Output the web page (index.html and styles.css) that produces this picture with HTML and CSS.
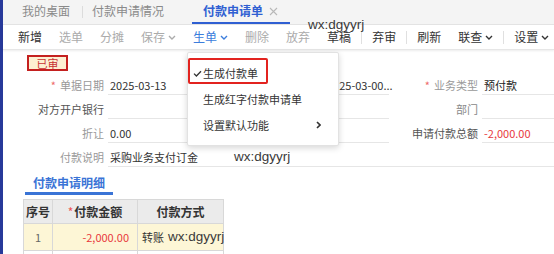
FILE: index.html
```html
<!DOCTYPE html>
<html lang="zh-CN">
<head>
<meta charset="utf-8">
<title>付款申请单</title>
<link rel="stylesheet" href="styles.css">
</head>
<body>
<div class="app">
  <div class="strip"></div>
  <div class="main">
    <div class="tabs">
      <div class="tab">我的桌面</div>
      <div class="tab tab-sep">付款申请情况</div>
      <div class="tab active">付款申请单<svg class="close" width="9" height="9" viewBox="0 0 9 9"><path d="M1 1l7 7M8 1L1 8" stroke="currentColor" stroke-width="1.1"/></svg></div>
    </div>
    <div class="toolbar">
      <span class="tb">新增</span>
      <span class="tb dis">选单</span>
      <span class="tb dis">分摊</span>
      <span class="tb dis">保存<svg class="chev" width="8" height="5" viewBox="0 0 8 5"><path d="M1 1l3 3 3-3" fill="none" stroke="currentColor" stroke-width="1.4"/></svg></span>
      <span class="tb blue">生单<svg class="chev" width="8" height="5" viewBox="0 0 8 5"><path d="M1 1l3 3 3-3" fill="none" stroke="currentColor" stroke-width="1.4"/></svg></span>
      <span class="tb dis">删除</span>
      <span class="tb dis">放弃</span>
      <span class="tb">草稿</span>
      <span class="sep"></span>
      <span class="tb">弃审</span>
      <span class="sep"></span>
      <span class="tb">刷新</span>
      <span class="tb">联查<svg class="chev" width="8" height="5" viewBox="0 0 8 5"><path d="M1 1l3 3 3-3" fill="none" stroke="currentColor" stroke-width="1.4"/></svg></span>
      <span class="sep"></span>
      <span class="tb">设置<svg class="chev" width="8" height="5" viewBox="0 0 8 5"><path d="M1 1l3 3 3-3" fill="none" stroke="currentColor" stroke-width="1.4"/></svg></span>
    </div>
    <div class="content">
      <div class="badge">已审</div>
      <div class="form">
        <div class="lbl light"><i>*</i>单据日期</div><div class="fld">2025-03-13</div>
        <div class="lbl"></div><div class="fld vis">2025-03-00...</div>
        <div class="lbl light"><i>*</i>业务类型</div><div class="fld strong">预付款</div>

        <div class="lbl">对方开户银行</div><div class="fld"></div>
        <div class="lbl"></div><div class="fld"></div>
        <div class="lbl mid">部门</div><div class="fld"></div>

        <div class="lbl light">折让</div><div class="fld">0.00</div>
        <div class="lbl"></div><div class="fld"></div>
        <div class="lbl">申请付款总额</div><div class="fld red">-2,000.00</div>

        <div class="lbl light">付款说明</div><div class="fld wide">采购业务支付订金</div>
      </div>
      <div class="sec"><span>付款申请明细</span></div>
      <table class="grid">
        <colgroup><col class="c1"><col class="c2"><col class="c3"></colgroup>
        <thead>
          <tr><th>序号</th><th><i>*</i>付款金额</th><th>付款方式</th></tr>
        </thead>
        <tbody>
          <tr class="cur"><td class="num">1</td><td class="amt">-2,000.00</td><td class="way">转账</td></tr>
          <tr><td></td><td></td><td></td></tr>
        </tbody>
      </table>
    </div>
  </div>

  <div class="dropdown">
    <div class="mi"><svg class="check" width="9" height="7" viewBox="0 0 9 7"><path d="M1 3.6l2.4 2.4L8 1.2" fill="none" stroke="currentColor" stroke-width="1.3"/></svg>生成付款单</div>
    <div class="mi">生成红字付款申请单</div>
    <div class="mi sub">设置默认功能<svg class="arr" width="5" height="8" viewBox="0 0 5 8"><path d="M1 1l3 3-3 3" fill="none" stroke="currentColor" stroke-width="1.6"/></svg></div>
    <div class="mark"></div>
  </div>

  <span class="wm wm1">wx:dgyyrj</span>
  <span class="wm wm2">wx:dgyyrj</span>
  <span class="wm wm3">wx:dgyyrj</span>
</div>
</body>
</html>
```
FILE: styles.css
```css
* { box-sizing: border-box; }
html, body { margin: 0; padding: 0; }
body {
  width: 554px;
  height: 254px;
  overflow: hidden;
  background: #fff;
  font-family: "Noto Sans CJK SC", "Noto Sans", sans-serif;
  font-size: 12px;
  color: #333;
}
.app {
  position: relative;
  display: flex;
  width: 554px;
  height: 254px;
}
.strip {
  width: 3px;
  flex: none;
  background: #27399a;
}
.main {
  flex: 1;
  min-width: 0;
}

/* tabs */
.tabs {
  display: flex;
  height: 25px;
  padding-left: 19px;
  background: #f4f4f4;
  border-bottom: 1px solid #e4e4e4;
}
.tab {
  position: relative;
  height: 24px;
  line-height: 22px;
  color: #8a8a8a;
  padding-right: 12px;
  white-space: nowrap;
}
.tab-sep { padding-left: 10px; padding-right: 0; }
.tab-sep::before {
  content: "";
  position: absolute;
  left: 0;
  top: 6px;
  width: 1px;
  height: 12px;
  background: #dcdcdc;
}
.tab.active {
  margin-left: 28px;
  padding: 0 12px 0 11px;
  color: #2f5fd2;
  font-weight: bold;
  border-bottom: 2px solid #2f5fd2;
  display: flex;
  align-items: center;
}
.close { color: #b8b8b8; margin-left: 6px; }

/* toolbar */
.toolbar {
  display: flex;
  align-items: center;
  gap: 17px;
  height: 25px;
  padding-left: 15px;
  background: #fff;
  border-bottom: 1px solid #e6e6e6;
  box-shadow: 0 1px 2px rgba(0,0,0,0.08);
  white-space: nowrap;
}
.tb { display: flex; align-items: center; color: #333; line-height: 16px; }
.tb.dis { color: #ababab; }
.tb.blue { color: #3c7ddc; }
.chev { margin-left: 3px; }
.sep {
  width: 1px;
  height: 13px;
  background: #e0e0e0;
  margin: 0 -7px;
}

/* content */
.content { padding: 5px 0 0 24px; }
.badge {
  width: 41px;
  height: 16px;
  line-height: 12px;
  text-align: center;
  border: 2px solid #c4201f;
  background: #fdf0d2;
  color: #c83232;
  font-size: 11px;
  margin-bottom: 4px;
}
.form {
  display: grid;
  grid-template-columns: 81px 128px 89px 64px 93px 1fr;
  grid-auto-rows: 20px;
  row-gap: 4px;
  font-size: 11px;
}
.lbl {
  text-align: right;
  padding-right: 4px;
  line-height: 20px;
  color: #555;
  white-space: nowrap;
}
.lbl.light { color: #999; }
.lbl.mid { color: #888; }
.lbl i {
  font-style: normal;
  color: #ee6a6a;
  margin-right: 4px;
}
.fld {
  border-bottom: 1px solid #e6e6e6;
  padding-left: 2px;
  line-height: 20px;
  color: #333;
  white-space: nowrap;
  overflow: hidden;
}
.fld.vis { overflow: visible; }
.fld.strong { color: #222; }
.fld.red { color: #e8383d; }
.fld.wide { grid-column: 2 / -1; }

.sec {
  margin: 8px 0 0 -2px;
  width: 88px;
  text-align: center;
  border-bottom: 3px solid #3a74d6;
  height: 20px;
}
.sec span {
  display: block;
  line-height: 16px;
  color: #3a74d6;
  font-weight: bold;
}

.grid {
  margin: 4px 0 0 -4px;
  border-collapse: collapse;
  table-layout: fixed;
  width: 200px;
}
.c1 { width: 29px; }
.c2 { width: 85px; }
.c3 { width: 86px; }
.grid th, .grid td {
  border: 1px solid #d8d8d8;
  padding: 0;
  white-space: nowrap;
}
.grid th {
  height: 24px;
  background: #ebebeb;
  font-weight: bold;
  color: #333;
  text-align: center;
}
.grid th i { font-style: normal; color: #ee5555; font-weight: normal; margin-right: 1px; }
.grid td { height: 27px; font-size: 11px; }
.grid tr.cur td { background: #fdf6d6; }
.num { text-align: center; color: #666; }
.amt { text-align: right; padding-right: 8px !important; color: #e8383d; }
.way { padding-left: 4px !important; color: #333; }

/* dropdown */
.dropdown {
  position: absolute;
  left: 187px;
  top: 52px;
  width: 152px;
  height: 94px;
  padding: 7px 0;
  background: #fff;
  border: 1px solid #e2e2e2;
  border-radius: 2px;
  box-shadow: 0 2px 6px rgba(0,0,0,0.16);
  font-size: 11px;
}
.mi {
  position: relative;
  height: 26px;
  line-height: 26px;
  padding-left: 15px;
  color: #333;
  white-space: nowrap;
}
.check { position: absolute; left: 5px; top: 10px; color: #333; }
.sub { display: flex; align-items: center; }
.arr { margin-left: auto; margin-right: 17px; color: #333; }
.mark {
  position: absolute;
  left: 0;
  top: 5px;
  width: 80px;
  height: 26px;
  border: 2px solid #e2231f;
  border-radius: 2px;
}

/* watermarks */
.wm {
  position: absolute;
  font-family: "Liberation Sans", Arial, sans-serif;
  font-size: 13.5px;
  line-height: 16px;
  color: #3a3a3a;
  white-space: nowrap;
}
.wm1 { left: 308px; top: 17px; }
.wm2 { left: 234px; top: 149px; }
.wm3 { left: 168px; top: 229px; }
```
